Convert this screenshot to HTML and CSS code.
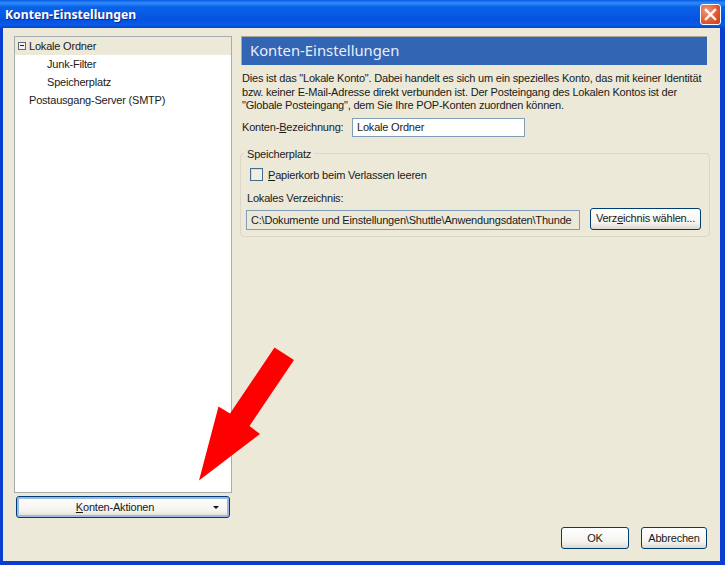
FILE: index.html
```html
<!DOCTYPE html>
<html lang="de">
<head>
<meta charset="utf-8">
<title>Konten-Einstellungen</title>
<link rel="stylesheet" href="styles.css">
</head>
<body>
<div class="window">
  <header class="titlebar">
    <span class="title">Konten-Einstellungen</span>
    <button class="close" aria-label="Schließen">
      <svg width="13" height="13" viewBox="0 0 13 13"><path d="M2 2 L11 11 M11 2 L2 11" stroke="#fff" stroke-width="2.4" stroke-linecap="square" fill="none"/></svg>
    </button>
  </header>
  <div class="client">
    <aside class="side">
      <div class="tree">
        <div class="row selected"><span class="minus"></span>Lokale Ordner</div>
        <div class="row child">Junk-Filter</div>
        <div class="row child">Speicherplatz</div>
        <div class="row top">Postausgang-Server (SMTP)</div>
      </div>
      <button class="btn actions"><span class="actions-label"><u>K</u>onten-Aktionen</span><span class="caret"></span></button>
    </aside>
    <main class="main">
      <h1 class="banner">Konten-Einstellungen</h1>
      <p class="intro">Dies ist das "Lokale Konto". Dabei handelt es sich um ein spezielles Konto, das mit keiner Identität<br>bzw. keiner E-Mail-Adresse direkt verbunden ist. Der Posteingang des Lokalen Kontos ist der<br>"Globale Posteingang", dem Sie Ihre POP-Konten zuordnen können.</p>
      <div class="name-row">
        <label class="name-label">Konten-<u>B</u>ezeichnung:</label>
        <div class="field name-field">Lokale Ordner</div>
      </div>
      <section class="group">
        <span class="legend">Speicherplatz</span>
        <div class="check-row"><span class="check"></span><span><u>P</u>apierkorb beim Verlassen leeren</span></div>
        <div class="dir-label">Lokales Verzeichnis:</div>
        <div class="dir-row">
          <div class="field dir-field">C:\Dokumente und Einstellungen\Shuttle\Anwendungsdaten\Thunde</div>
          <button class="btn dir-btn">Verz<u>e</u>ichnis wählen...</button>
        </div>
      </section>
      <div class="footer">
        <button class="btn ok">OK</button>
        <button class="btn cancel">Abbrechen</button>
      </div>
    </main>
  </div>
  <svg class="arrow" width="725" height="565" viewBox="0 0 725 565"><polygon points="274.5,347.5 294,360 249.5,426 260,434 199,480.5 218.5,406.5 230,413.5" fill="#ff0000"/></svg>
</div>
</body>
</html>
```
FILE: styles.css
```css
* { box-sizing: border-box; }
html, body { margin: 0; padding: 0; }
body { width: 725px; height: 565px; overflow: hidden; font-family: "Liberation Sans", sans-serif; font-size: 11px; letter-spacing: -0.2px; color: #1a1a1a; }
.window { position: relative; width: 725px; height: 565px; display: flex; flex-direction: column; background: #0a3ed0; padding: 0 5px 4px 3px; }
.titlebar { height: 28px; margin: 0 -5px 0 -3px; padding: 1px 3px 0 5px; flex: none; display: flex; align-items: center; justify-content: space-between; background: linear-gradient(#0a5be6 0, #2f8cf8 3px, #0a62ea 7px, #0453e0 20px, #0a5ae8 25px, #0446c8 28px); }
.title { color: #fff; font: 700 12.2px "Noto Sans", sans-serif; letter-spacing: 0; text-shadow: 1px 1px 0 #0a2a90; }
.close { width: 21px; height: 21px; padding: 0; display: flex; align-items: center; justify-content: center; border: 1px solid #fff; border-radius: 3px; background: radial-gradient(circle at 30% 30%, #ee9a80, #e0552e 60%, #c23c18); margin-right: 1px; }
.client { flex: 1; display: flex; background: #ece9d8; padding: 8px 13px 12px 11px; min-height: 0; }
.side { width: 218px; flex: none; display: flex; flex-direction: column; padding-bottom: 31px; }
.tree { flex: 1; background: #fff; border: 1px solid #a5acb2; }
.row { height: 18px; line-height: 18px; padding-left: 14px; white-space: nowrap; position: relative; }
.row.selected { background: #ece9d8; }
.row.child { padding-left: 32px; }
.minus { position: absolute; left: 3px; top: 5px; width: 8px; height: 8px; border: 1px solid #5a6a80; background: #f4f2e8; }
.minus::after { content: ""; position: absolute; left: 1px; top: 2px; width: 4px; height: 1px; background: #222; }
.btn { font: inherit; letter-spacing: inherit; color: #1a1a1a; background: linear-gradient(#fff, #f4f3ee 70%, #dcd8ce); border: 1px solid #003c74; border-radius: 3px; padding: 0; white-space: nowrap; }
.actions { margin: 3px 2px 0; height: 22px; flex: none; position: relative; display: flex; align-items: center; justify-content: center; padding: 0 16px 1px 0; box-shadow: inset 0 0 0 2px #9db8e4; }
.caret { position: absolute; right: 10px; top: 9px; border: 3px solid transparent; border-top-color: #111; border-bottom: 0; }
.main { flex: 1; min-width: 0; margin-left: 10px; display: flex; flex-direction: column; }
.banner { margin: 0 0 0 -1px; height: 29px; flex: none; width: 466px; background: #3365b5; border-top: 1px solid #aca899; border-left: 1px solid #aca899; color: #e8eef8; font: 400 14.8px/27px "Noto Sans", sans-serif; letter-spacing: 0; padding-left: 8px; }
.intro { margin: 7px 0 0; line-height: 13.5px; white-space: nowrap; }
.name-row { display: flex; align-items: center; margin-top: 5px; height: 19px; }
.name-label { width: 110px; flex: none; white-space: nowrap; }
.field { border: 1px solid #7f9db9; background: #fff; white-space: nowrap; overflow: hidden; }
.name-field { width: 173px; height: 19px; line-height: 17px; padding-left: 4px; }
.group { position: relative; width: 470px; height: 84px; margin: 16px 0 0 -2px; border: 1px solid #dcd8c8; border-radius: 4px; padding: 14px 8px 0 5px; }
.legend { position: absolute; left: 3px; top: -7px; padding: 0 3px; background: #ece9d8; line-height: 14px; }
.check-row { display: flex; align-items: center; gap: 5px; height: 14px; padding-left: 4px; }
.check { width: 13px; height: 13px; flex: none; border: 1px solid #45698f; background: #f1efe2; box-shadow: inset 1px 1px 0 #e0ddcc; }
.dir-label { margin-top: 9px; padding-left: 1px; line-height: 14px; }
.dir-row { display: flex; align-items: flex-end; justify-content: space-between; height: 22px; margin-top: 3px; }
.dir-field { width: 334px; height: 20px; line-height: 18px; padding-left: 4px; background: #ece9d8; }
.dir-btn { width: 111px; height: 22px; padding-bottom: 2px; }
.footer { margin-top: auto; display: flex; gap: 12px; padding-left: 319px; }
.ok { width: 68px; height: 22px; }
.cancel { width: 66px; height: 22px; }
.arrow { position: absolute; left: 0; top: 0; pointer-events: none; }
```
